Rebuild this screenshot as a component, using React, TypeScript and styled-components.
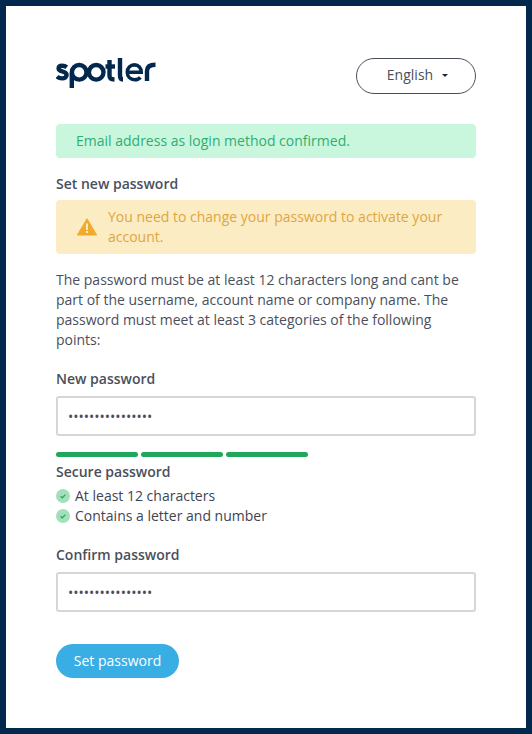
import React from "react";
import styled, { createGlobalStyle } from "styled-components";

const Global = createGlobalStyle`
  html, body { margin: 0; padding: 0; background: #fff; }
  * { box-sizing: border-box; }
`;

const Page = styled.div`
  width: 532px;
  height: 734px;
  border: 6px solid #02284e;
  background: #fff;
  padding: 52px 50px 0;
  font-family: "Open Sans", "Liberation Sans", sans-serif;
  font-size: 14px;
  line-height: 20px;
  color: #4a4f5c;
`;

const Header = styled.header`
  display: flex;
  justify-content: space-between;
  align-items: flex-start;
  height: 36px;
  margin-bottom: 30px;
`;

const LogoMark = styled.svg`
  display: block;
  width: 100px;
  height: 30px;
`;

const LangButton = styled.button`
  width: 120px;
  height: 36px;
  border: 1px solid #4a4f5c;
  border-radius: 18px;
  background: #fff;
  color: #4a4f5c;
  font: inherit;
  padding: 0 0 2px 3px;
  display: flex;
  align-items: center;
  justify-content: center;
  gap: 9px;
`;

const Caret = styled.span`
  width: 0;
  height: 0;
  border-left: 3px solid transparent;
  border-right: 3px solid transparent;
  border-top: 3px solid #1f2430;
`;

const Notice = styled.div<{ $tone: "success" | "warning" }>`
  display: flex;
  align-items: center;
  gap: 11px;
  border-radius: 4px;
  padding: ${(p) => (p.$tone === "success" ? "7px 20px" : "7px 21px")};
  background: ${(p) => (p.$tone === "success" ? "#c9f7de" : "#fcecc4")};
  color: ${(p) => (p.$tone === "success" ? "#2fae70" : "#dfa63e")};
`;

const Title = styled.div`
  font-weight: 600;
  margin-top: 16px;
  margin-bottom: 6px;
`;

const Paragraph = styled.p`
  margin: 16px 0 0;
`;

const FieldLabel = styled.label`
  display: block;
  font-weight: 600;
  margin-top: 19px;
  margin-bottom: 7px;
`;

const PasswordInput = styled.input`
  display: block;
  width: 100%;
  height: 40px;
  border: 2px solid #d6d6d6;
  border-radius: 3px;
  background: #fff;
  padding: 0 10px;
  color: #4a4f5c;
  font: inherit;
  outline: none;
`;

const Strength = styled.div`
  display: flex;
  gap: 3px;
  margin-top: 16px;
`;

const StrengthBar = styled.span`
  width: 82px;
  height: 5px;
  border-radius: 3px;
  background: #1fa85a;
`;

const StrengthLabel = styled.div`
  font-weight: 600;
  margin-top: 5px;
  margin-bottom: 4px;
`;

const Checks = styled.ul`
  list-style: none;
  margin: 0;
  padding: 0;
`;

const Check = styled.li`
  display: flex;
  align-items: center;
  gap: 5px;
  color: #3f4450;
`;

const CheckDot = styled.svg`
  width: 14px;
  height: 14px;
  flex: none;
`;

const WarningIcon = styled.svg`
  width: 20px;
  height: 18px;
  flex: none;
`;

const Submit = styled.button`
  display: block;
  margin-top: 32px;
  width: 123px;
  height: 34px;
  border: 0;
  border-radius: 17px;
  background: #38aee5;
  color: #fff;
  font: inherit;
  padding: 0;
`;

const Tick = () => (
  <CheckDot viewBox="0 0 14 14">
    <circle cx="7" cy="7" r="7" fill="#a3dfba" />
    <path d="M4.6 7.2l1.7 1.6 3.1-3.2" fill="none" stroke="#1fa85a" strokeWidth="1.2" />
  </CheckDot>
);

const Logo = () => (
  <LogoMark viewBox="0 0 100 30" fill="none" stroke="#02284e" strokeWidth="4.4" aria-label="spotler">
    <path d="M10.800 8.300C9.400 7.200 7.800 6.800 6.200 6.800 3.800 6.800 2.600 7.900 2.600 9.500c0 1.700 1.600 2.300 3.600 2.800 2.500.6 4.400 1.400 4.400 3.600 0 2-1.800 3.500-4.600 3.500-2 0-3.900-.7-5-1.900" transform="translate(0 1)" />
    <path d="M15.800 30V14.500" />
    <circle cx="23.200" cy="14.300" r="7.300" />
    <circle cx="40.200" cy="14.300" r="7.300" />
    <path d="M36.500 3.700l6-1.500" stroke="#ffffff" strokeWidth="1.500" />
    <path d="M53.500 2v15.500c0 2.900 1.400 4 5 4" />
    <path d="M49.500 8.500h9.500" />
    <path d="M64 0v17.500c0 2.900 1 4 3 4" />
    <path d="M71.300 14.200h13.900c0-4.400-2.700-7.300-6.700-7.300-4.300 0-7.200 3.200-7.200 7.400s3 7.400 7.500 7.400c2.400 0 4.400-.9 5.600-2.400" strokeWidth="3.600" />
    <path d="M91 23V13c0-4 2.800-6.200 8.500-6.200" />
  </LogoMark>
);

export default function App() {
  return (
    <Page>
      <Global />
      <Header>
        <Logo />
        <LangButton>
          English
          <Caret />
        </LangButton>
      </Header>
      <Notice $tone="success">Email address as login method confirmed.</Notice>
      <Title>Set new password</Title>
      <Notice $tone="warning">
        <WarningIcon viewBox="0 0 20 18">
          <path d="M10 1L19.500 17H.5z" fill="#f0ab2e" stroke="#f0ab2e" strokeWidth="1.200" strokeLinejoin="round" />
          <rect x="9" y="5.500" width="2" height="6.500" fill="#fcecc4" />
          <rect x="9" y="13" width="2" height="2" fill="#fcecc4" />
        </WarningIcon>
        <span>You need to change your password to activate your account.</span>
      </Notice>
      <Paragraph>
        The password must be at least 12 characters long and cant be part of the username, account name or company
        name. The password must meet at least 3 categories of the following points:
      </Paragraph>
      <FieldLabel>New password</FieldLabel>
      <PasswordInput type="password" defaultValue="aaaaaaaaaaaaaaaa" />
      <Strength>
        <StrengthBar />
        <StrengthBar />
        <StrengthBar />
      </Strength>
      <StrengthLabel>Secure password</StrengthLabel>
      <Checks>
        <Check>
          <Tick />
          At least 12 characters
        </Check>
        <Check>
          <Tick />
          Contains a letter and number
        </Check>
      </Checks>
      <FieldLabel>Confirm password</FieldLabel>
      <PasswordInput type="password" defaultValue="aaaaaaaaaaaaaaaa" />
      <Submit>Set password</Submit>
    </Page>
  );
}
